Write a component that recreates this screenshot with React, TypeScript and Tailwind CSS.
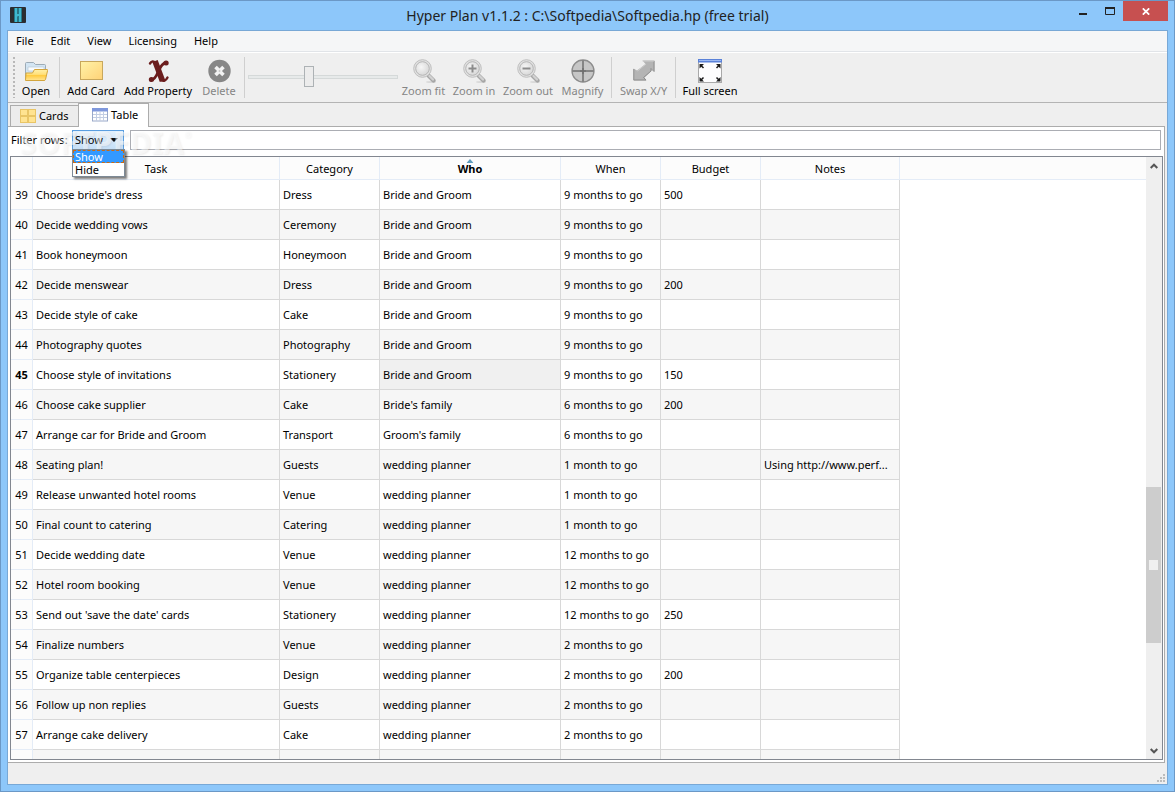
import type { ReactNode } from 'react';

type Row = [number, string, string, string, string, string, string];

const ROWS: Row[] = [
  [39, "Choose bride's dress", 'Dress', 'Bride and Groom', '9 months to go', '500', ''],
  [40, 'Decide wedding vows', 'Ceremony', 'Bride and Groom', '9 months to go', '', ''],
  [41, 'Book honeymoon', 'Honeymoon', 'Bride and Groom', '9 months to go', '', ''],
  [42, 'Decide menswear', 'Dress', 'Bride and Groom', '9 months to go', '200', ''],
  [43, 'Decide style of cake', 'Cake', 'Bride and Groom', '9 months to go', '', ''],
  [44, 'Photography quotes', 'Photography', 'Bride and Groom', '9 months to go', '', ''],
  [45, 'Choose style of invitations', 'Stationery', 'Bride and Groom', '9 months to go', '150', ''],
  [46, 'Choose cake supplier', 'Cake', "Bride's family", '6 months to go', '200', ''],
  [47, 'Arrange car for Bride and Groom', 'Transport', "Groom's family", '6 months to go', '', ''],
  [48, 'Seating plan!', 'Guests', 'wedding planner', '1 month to go', '', 'Using http://www.perf...'],
  [49, 'Release unwanted hotel rooms', 'Venue', 'wedding planner', '1 month to go', '', ''],
  [50, 'Final count to catering', 'Catering', 'wedding planner', '1 month to go', '', ''],
  [51, 'Decide wedding date', 'Venue', 'wedding planner', '12 months to go', '', ''],
  [52, 'Hotel room booking', 'Venue', 'wedding planner', '12 months to go', '', ''],
  [53, "Send out 'save the date' cards", 'Stationery', 'wedding planner', '12 months to go', '250', ''],
  [54, 'Finalize numbers', 'Venue', 'wedding planner', '2 months to go', '', ''],
  [55, 'Organize table centerpieces', 'Design', 'wedding planner', '2 months to go', '200', ''],
  [56, 'Follow up non replies', 'Guests', 'wedding planner', '2 months to go', '', ''],
  [57, 'Arrange cake delivery', 'Cake', 'wedding planner', '2 months to go', '', ''],
];

const COLUMNS = ['Task', 'Category', 'Who', 'When', 'Budget', 'Notes'];
const CURRENT_ROW = 45;

function ToolButton({ label, width, disabled, children }: { label: string; width: string; disabled?: boolean; children: ReactNode }) {
  return (
    <button
      type="button"
      disabled={disabled}
      className={`flex shrink-0 flex-col items-center pt-1.5 whitespace-nowrap text-black disabled:text-[#858585] ${width}`}
    >
      <svg viewBox="0 0 24 24" className="size-6" aria-hidden="true">
        {children}
      </svg>
      <span className="leading-4">{label}</span>
    </button>
  );
}

function Separator() {
  return (
    <div className="flex w-[5px] shrink-0 justify-center py-1">
      <div className="w-px bg-[#cfcfcf]" />
    </div>
  );
}

function Lens({ children }: { children?: ReactNode }) {
  return (
    <>
      <ellipse cx="19" cy="23" rx="5" ry="1" fill="#d9d9d9" />
      <path d="M17 17 L21.5 21.5" stroke="#a6a6a6" strokeWidth="4.2" strokeLinecap="round" />
      <path d="M17.5 17 L21 20.500" stroke="#d2d2d2" strokeWidth="2.4" strokeLinecap="round" />
      <circle cx="10.5" cy="9.500" r="8.800" fill="#e2e2e2" stroke="#bababa" strokeWidth="0.9" />
      <circle cx="10.5" cy="9.500" r="6.800" fill="url(#glass)" stroke="#b0b0b0" strokeWidth="0.9" />
      {children}
    </>
  );
}

function MenuBar() {
  return (
    <nav className="flex h-[21px] shrink-0 items-center gap-[17px] border-b border-[#e1e4e8] bg-[#f5f6f7] pl-2">
      {['File', 'Edit', 'View', 'Licensing', 'Help'].map((m) => (
        <button key={m} type="button" className="leading-4">
          {m}
        </button>
      ))}
    </nav>
  );
}

function ToolBar() {
  return (
    <div className="flex h-[51px] shrink-0 border-t border-b border-t-white border-b-[#b4b4b4] bg-[#efefef]">
      <svg width="0" height="0" className="absolute" aria-hidden="true">
        <defs>
          <radialGradient id="glass" cx="0.4" cy="0.4" r="0.7">
            <stop offset="0" stopColor="#f6f6f6" />
            <stop offset="1" stopColor="#d4d4d4" />
          </radialGradient>
          <linearGradient id="card" x1="0" y1="0" x2="1" y2="1">
            <stop offset="0" stopColor="#fff3a8" />
            <stop offset="1" stopColor="#ffd277" />
          </linearGradient>
          <linearGradient id="folder" x1="0" y1="0" x2="0" y2="1">
            <stop offset="0" stopColor="#fff0a8" />
            <stop offset="0.45" stopColor="#ffe07a" />
            <stop offset="0.5" stopColor="#ffc93a" />
            <stop offset="1" stopColor="#ffe594" />
          </linearGradient>
        </defs>
      </svg>
      <div className="flex w-[7px] shrink-0 justify-end py-1">
        <div className="w-0.5 bg-[repeating-linear-gradient(to_bottom,#b9b9b9_0_2px,#efefef_2px_4px)]" />
      </div>
      <ToolButton label="Open" width="w-[42px]">
        <path d="M1.5 20 V4.5 Q1.5 3.5 2.5 3.5 H9.5 L11.5 5.500 H20.5 Q21.5 5.500 21.5 6.500 V11" fill="#d3e5f3" stroke="#9dabb6" />
        <path d="M4 8 H20 V12 H4 Z" fill="#f7fbfe" stroke="#b9c9d6" strokeWidth="0.7" />
        <path d="M1.5 21.5 L2 14 H8.5 L10.5 10.5 H23 Q24 10.5 23.6 11.5 L21.5 20.5 Q21.2 21.5 20 21.5 Z" fill="url(#folder)" stroke="#d3a53c" />
      </ToolButton>
      <Separator />
      <ToolButton label="Add Card" width="w-[58px]">
        <rect x="1.5" y="2.5" width="22" height="18" fill="url(#card)" stroke="#c8a75c" />
      </ToolButton>
      <ToolButton label="Add Property" width="w-[76px]">
        <g fill="none" stroke="#6b1d1d">
          <path d="M4 4.500 Q6.500 0.500 9.500 4" strokeWidth="2.400" strokeLinecap="round" />
          <path d="M9 2 L16.500 22" strokeWidth="5.800" />
          <path d="M15 21 Q19 23.500 21.500 18.500" strokeWidth="2.400" strokeLinecap="round" />
          <path d="M20.500 3.500 C16 4 14 8.500 12.500 12 C11 15.500 9.500 20.500 5 21" strokeWidth="2.800" strokeLinecap="round" />
          <path d="M20 4 h.2 M5.300 20.500 h.2" strokeWidth="5" strokeLinecap="round" />
        </g>
      </ToolButton>
      <ToolButton label="Delete" width="w-[46px]" disabled>
        <circle cx="12.5" cy="12" r="11.2" fill="#878787" />
        <path d="M9.800 9.300 L15.200 14.700 M15.200 9.300 L9.800 14.700" stroke="#f2f2f2" strokeWidth="3.600" strokeLinecap="square" />
        <path d="M12.500 10.800 L13.700 12 L12.500 13.200 L11.300 12 Z" fill="#c6c6c6" />
      </ToolButton>
      <Separator />
      <div className="flex w-[152px] shrink-0 items-center px-px pb-0.5">
        <input
          type="range"
          aria-label="Zoom"
          disabled
          defaultValue={40}
          className="h-[21px] w-full appearance-none bg-transparent [&::-webkit-slider-runnable-track]:h-1 [&::-webkit-slider-runnable-track]:border [&::-webkit-slider-runnable-track]:border-[#d5d9d9] [&::-webkit-slider-runnable-track]:bg-[#e7eaea] [&::-webkit-slider-thumb]:-mt-[10px] [&::-webkit-slider-thumb]:h-[21px] [&::-webkit-slider-thumb]:w-[10px] [&::-webkit-slider-thumb]:appearance-none [&::-webkit-slider-thumb]:border [&::-webkit-slider-thumb]:border-[#adb2b5] [&::-webkit-slider-thumb]:bg-[#ececec]"
        />
      </div>
      <ToolButton label="Zoom fit" width="w-[49px]" disabled>
        <Lens />
      </ToolButton>
      <ToolButton label="Zoom in" width="w-[52px]" disabled>
        <Lens>
          <path d="M10.500 5.500 V13.500 M6.500 9.500 H14.500" stroke="#8c8c8c" strokeWidth="2" />
        </Lens>
      </ToolButton>
      <ToolButton label="Zoom out" width="w-[56px]" disabled>
        <Lens>
          <path d="M6.500 9.500 H14.500" stroke="#8c8c8c" strokeWidth="2" />
        </Lens>
      </ToolButton>
      <ToolButton label="Magnify" width="w-[53px]" disabled>
        <circle cx="12" cy="12" r="11" fill="#c6c6c6" stroke="#8c8c8c" strokeWidth="1.300" />
        <path d="M12 1 V23 M1 12 H23" stroke="#858585" strokeWidth="2" />
        <path d="M12 9 V15 M9 12 H15" stroke="#666" strokeWidth="1" />
      </ToolButton>
      <Separator />
      <ToolButton label="Swap X/Y" width="w-[59px]" disabled>
        <path d="M10.500 1.500 H22.500 V12.500 L19.500 9.800 V12 L12.500 18.500 L14.500 21.500 H1.500 V9.500 L5 11.500 L13.500 5 Z" fill="#b4b4b4" />
        <path d="M1.800 10 V21 H14 L11.500 18.500 L19 12 V9.500 L22 12.500 V2" fill="none" stroke="#8f8f8f" />
        <path d="M10.500 2 H22 M5.500 12 L14 5" fill="none" stroke="#cdcdcd" />
      </ToolButton>
      <Separator />
      <ToolButton label="Full screen" width="w-[64px]">
        <rect x="0.500" y="0.500" width="23" height="23" fill="#fdfdfe" stroke="#a9a9a9" />
        <rect x="0" y="0" width="24" height="3.500" fill="#5b82d8" />
        <rect x="1" y="1" width="22" height="1" fill="#9cb9f2" />
        <path d="M1.500 5 H6 L1.500 9.500 Z M22.500 5 H18 L22.500 9.500 Z M1.500 22.500 H6 L1.500 18 Z M22.500 22.500 H18 L22.500 18 Z" fill="#1c1c1c" />
        <path d="M3 6.500 L5.500 9 M21 6.500 L18.500 9 M3 21 L5.500 18.500 M21 21 L18.500 18.500" stroke="#1c1c1c" strokeWidth="1.500" />
      </ToolButton>
    </div>
  );
}

function CardsIcon() {
  return (
    <svg viewBox="0 0 16 14" className="h-3.5 w-4" aria-hidden="true">
      {[0, 8].map((x) =>
        [0, 7].map((y) => (
          <rect key={`${x}-${y}`} x={x + 0.5} y={y + 0.5} width="7" height="6" fill="#ffe391" stroke="#e9c566" />
        )),
      )}
    </svg>
  );
}

function TableIcon() {
  return (
    <svg viewBox="0 0 16 14" className="h-3.5 w-4" aria-hidden="true">
      <rect x="0.500" y="0.500" width="15" height="12.500" fill="#fff" stroke="#9aa9c9" />
      <rect x="0" y="0" width="16" height="3.500" fill="#7f98dc" />
      <path d="M1 6.500 H15 M1 9.500 H15 M4.500 3.500 V13 M8 3.500 V13 M11.500 3.500 V13" stroke="#c3cee3" />
    </svg>
  );
}

function FilterBar() {
  return (
    <div className="relative flex h-[29px] shrink-0 items-start bg-white pt-[3px] pr-[3px] pl-[3px]">
      <label htmlFor="filter-mode" className="w-[61px] shrink-0 leading-5 whitespace-nowrap">
        Filter rows:
      </label>
      <div className="relative w-[52px] shrink-0">
        <select
          id="filter-mode"
          defaultValue="Show"
          className="block h-5 w-full appearance-none border border-[#5a9ee0] bg-linear-to-b from-[#e3f0fc] to-[#c6e0f8] pl-0.5 text-black outline-none"
        >
          <option>Show</option>
          <option>Hide</option>
        </select>
        <svg viewBox="0 0 8 4" className="pointer-events-none absolute top-2 right-[6px] h-1 w-2" aria-hidden="true">
          <path d="M0 0 H8 L4 4 Z" fill="#111" />
        </svg>
        <ul role="listbox" aria-label="Filter mode" className="absolute top-[19px] left-0 z-20 w-[53px] border border-[#7d8a96] bg-white leading-[13px] shadow-[2px_2px_2px_rgba(0,0,0,0.5)]">
          <li role="option" aria-selected="true" className="bg-[#3399ff] pl-0.5 text-white outline-1 -outline-offset-1 outline-dashed outline-[#cc6a11]">
            Show
          </li>
          <li role="option" aria-selected="false" className="pl-0.5">
            Hide
          </li>
        </ul>
      </div>
      <input type="text" aria-label="Filter text" className="ml-1.5 h-5 min-w-0 flex-1 border border-[#abadb3] bg-white px-1 outline-none" />
      <div aria-hidden="true" className="pointer-events-none absolute top-0.5 left-3 z-10 flex items-start text-[30px] leading-7 font-bold text-white/50 [text-shadow:1px_1px_2px_rgba(0,0,0,0.07)] select-none">
        SOFTPEDIA<span className="text-[9px] leading-3">®</span>
      </div>
    </div>
  );
}

function DataTable() {
  return (
    <table className="w-full table-fixed border-separate border-spacing-0 text-left">
      <colgroup>
        <col className="w-[22px]" />
        <col className="w-[247px]" />
        <col className="w-[100px]" />
        <col className="w-[181px]" />
        <col className="w-[100px]" />
        <col className="w-[100px]" />
        <col className="w-[139px]" />
        <col />
      </colgroup>
      <thead>
        <tr className="h-[23px] bg-[#fcfcfc]">
          <td className="border-r border-b border-[#e4ecf7]" />
          {COLUMNS.map((c) => (
            <th
              key={c}
              scope="col"
              aria-sort={c === 'Who' ? 'ascending' : undefined}
              className={`relative border-r border-b border-[#e4ecf7] p-0 pt-0.5 text-center ${c === 'Who' ? 'font-bold' : 'font-normal'}`}
            >
              {c}
              {c === 'Who' && (
                <svg viewBox="0 0 7 4" className="absolute top-0.5 left-1/2 h-1 w-[7px] -translate-x-1/2" aria-hidden="true">
                  <path d="M3.500 0 L7 4 H0 Z" fill="#5f9dbd" />
                </svg>
              )}
            </th>
          ))}
          <td className="border-b border-[#e4ecf7]" />
        </tr>
      </thead>
      <tbody>
        {ROWS.map(([id, ...cells], i) => (
          <tr key={id} className="h-[30px]">
            <th
              scope="row"
              className={`border-r border-b border-[#e4ecf7] bg-[#fcfcfc] p-0 text-center ${id === CURRENT_ROW ? 'font-bold' : 'font-normal'}`}
            >
              {id}
            </th>
            {cells.map((cell, c) => (
              <td
                key={c}
                className={`overflow-hidden border-r border-b border-[#d8d8d8] py-0 pr-0 pl-[3px] whitespace-nowrap ${
                  id === CURRENT_ROW && c === 2 ? 'bg-[#f0f0f0]' : i % 2 ? 'bg-[#f6f6f6]' : 'bg-white'
                }`}
              >
                {cell}
              </td>
            ))}
            <td />
          </tr>
        ))}
        <tr className="h-[30px]">
          <th scope="row" aria-label="58" className="border-r border-[#e4ecf7] bg-[#fcfcfc]" />
          {COLUMNS.map((c) => (
            <td key={c} className="border-r border-[#d8d8d8] bg-[#f6f6f6]" />
          ))}
          <td />
        </tr>
      </tbody>
    </table>
  );
}

function ScrollBar() {
  return (
    <div className="flex w-4 shrink-0 flex-col items-center bg-[#efefef] pr-px">
      <button type="button" aria-label="Scroll up" className="flex h-[17px] w-full shrink-0 items-center justify-center">
        <svg viewBox="0 0 8 6" className="h-1.5 w-2" aria-hidden="true">
          <path d="M0.700 5 L4 1.700 L7.300 5" fill="none" stroke="#555" strokeWidth="2" />
        </svg>
      </button>
      <div className="flex min-h-0 w-full flex-1 flex-col">
        <div className="flex-[313]" />
        <div className="flex flex-[156] items-center justify-center bg-[#cdcdcd]">
          <div className="h-2.5 w-[9px] bg-[#f0f0f0]" />
        </div>
        <div className="flex-[99]" />
      </div>
      <button type="button" aria-label="Scroll down" className="flex h-[17px] w-full shrink-0 items-center justify-center">
        <svg viewBox="0 0 8 6" className="h-1.5 w-2" aria-hidden="true">
          <path d="M0.700 1 L4 4.300 L7.300 1" fill="none" stroke="#555" strokeWidth="2" />
        </svg>
      </button>
    </div>
  );
}

function TitleBar() {
  return (
    <header className="flex h-[29px] shrink-0 items-start">
      <div className="flex w-36 shrink-0 pt-[6px] pl-[3px]">
        <svg viewBox="0 0 16 16" className="size-4" aria-hidden="true">
          <rect width="16" height="16" rx="1" fill="#2b2d30" />
          <path d="M5 1 H7.500 V7 H9 V1 H11 V15 H9 V9.500 H7.500 V15 H5 Z" fill="#3fb9cf" />
          <path d="M4.500 1 V15 M11.500 1 V15" stroke="#23788a" strokeWidth="1" />
          <path d="M8.250 1 V7 M8.250 9.500 V15" stroke="#23788a" strokeWidth="1.500" />
        </svg>
      </div>
      <h1 className="flex-1 pt-[5px] text-center text-[14px] leading-5 text-[#222]">Hyper Plan v1.1.2 : C:\Softpedia\Softpedia.hp (free trial)</h1>
      <div className="flex w-36 shrink-0 items-start justify-end">
        <button type="button" aria-label="Minimize" className="flex h-5 w-7 items-center justify-center">
          <svg viewBox="0 0 10 10" className="size-2.5" aria-hidden="true">
            <path d="M1 8 H9" stroke="#222" strokeWidth="2" />
          </svg>
        </button>
        <button type="button" aria-label="Maximize" className="flex h-5 w-[26px] items-center justify-center">
          <svg viewBox="0 0 10 8" className="h-2 w-2.5" aria-hidden="true">
            <path d="M0.500 0 V7.500 H9.500 V0" fill="none" stroke="#222" />
            <path d="M0 1 H10" stroke="#222" strokeWidth="2" />
          </svg>
        </button>
        <button type="button" aria-label="Close" className="flex h-5 w-[45px] items-center justify-center bg-[#c75050]">
          <svg viewBox="0 0 8 7" className="h-[7px] w-2" aria-hidden="true">
            <path d="M0.800 0.300 L7.200 6.700 M7.200 0.300 L0.800 6.700" stroke="#fff" strokeWidth="1.700" />
          </svg>
        </button>
      </div>
    </header>
  );
}

export default function App() {
  return (
    <div className="flex h-screen flex-col overflow-hidden border border-[#6b98c6] bg-[#8dc7fa] px-[6px] pb-[6px] font-['Noto_Sans','Open_Sans',sans-serif] text-[11px] leading-4 text-black">
      <TitleBar />
      <div className="flex min-h-0 flex-1 flex-col border border-[#78a8d6] bg-[#efefef]">
        <MenuBar />
        <ToolBar />
        <div role="tablist" className="flex h-[23px] shrink-0 items-end pl-0.5">
          <button type="button" role="tab" aria-selected="false" className="flex h-[21px] w-[69px] items-center gap-[3px] border border-b-0 border-[#acacac] bg-[#ececec] pl-[9px]">
            <CardsIcon />
            Cards
          </button>
          <button type="button" role="tab" aria-selected="true" className="z-10 -mb-px -ml-px flex h-6 w-[71px] items-center gap-[3px] border border-b-0 border-[#acacac] bg-white pb-px pl-[13px]">
            <TableIcon />
            Table
          </button>
        </div>
        <main className="mr-0.5 flex min-h-0 flex-1 flex-col border border-l-0 border-[#acacac] bg-white">
          <FilterBar />
          <div className="mr-px mb-0.5 ml-0.5 flex min-h-0 flex-1 border border-[#828790]">
            <div className="min-w-0 flex-1 overflow-hidden">
              <DataTable />
            </div>
            <ScrollBar />
          </div>
        </main>
        <footer className="flex h-[21px] shrink-0 items-end justify-end p-0.5">
          <svg viewBox="0 0 8 8" className="size-2" aria-hidden="true">
            <path d="M6 0h2v2h-2z M3 3h2v2h-2z M6 3h2v2h-2z M0 6h2v2h-2z M3 6h2v2h-2z M6 6h2v2h-2z" fill="#bcbcbc" />
          </svg>
        </footer>
      </div>
    </div>
  );
}
